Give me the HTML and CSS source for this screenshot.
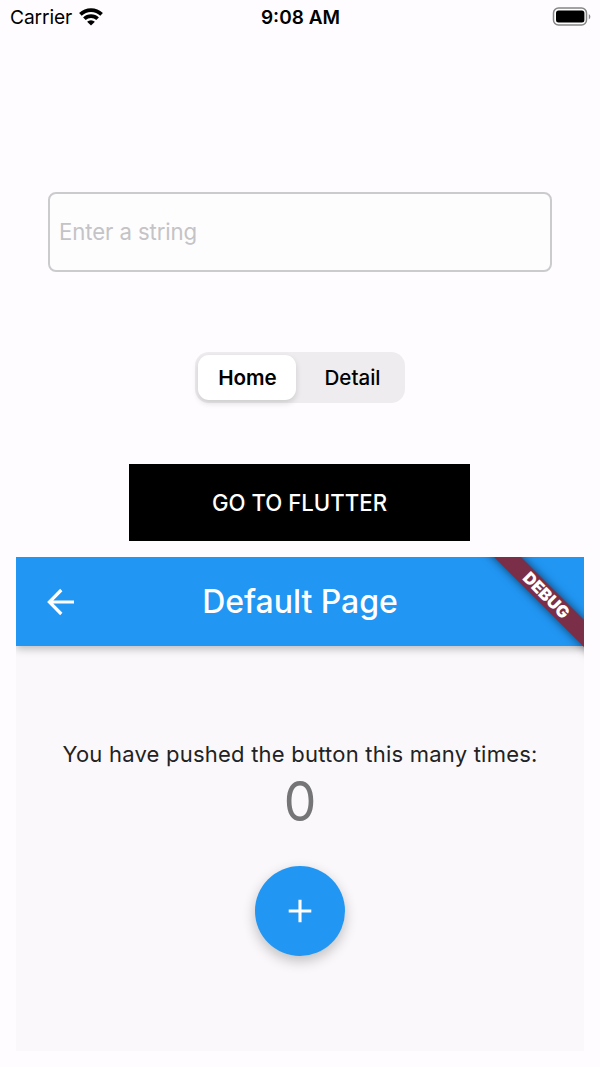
FILE: index.html
```html
<!DOCTYPE html>
<html lang="en">
<head>
<meta charset="utf-8">
<title>Default Page</title>
<link rel="stylesheet" href="styles.css">
</head>
<body>
<header class="status">
  <div class="carrier"><span class="carrier-name">Carrier</span>
    <svg class="wifi" width="24" height="18" viewBox="0 0 24 18"><g fill="none" stroke="#000" stroke-width="3.7"><path d="M1.4 6.4a15.2 15.2 0 0 1 21.2 0"/><path d="M5.4 10.8a9.4 9.4 0 0 1 13.2 0"/></g><path d="M12 17.6 8.1 13.8a5.5 5.5 0 0 1 7.8 0z"/></svg>
  </div>
  <span class="time">9:08 AM</span>
  <svg class="battery" width="39" height="20" viewBox="0 0 39 20"><rect x="1.5" y="1" width="33" height="17" rx="5" fill="none" stroke="#858585" stroke-width="1.5"/><rect x="4" y="3.4" width="28.4" height="12.2" rx="2.5"/><path d="M36.8 7v5.4q1.6-1 1.6-2.7T36.8 7z" fill="#858585"/></svg>
</header>
<main class="native">
  <input class="field" type="text" placeholder="Enter a string">
  <div class="segments"><span class="segment selected">Home</span><span class="segment">Detail</span></div>
  <button class="go">GO TO FLUTTER</button>
</main>
<section class="flutter">
  <div class="appbar">
    <svg class="back" width="28" height="28" viewBox="0 0 28 28"><path d="M27 14H3M14.3 2 2.4 14l11.9 12" fill="none" stroke="#fff" stroke-width="3.2"/></svg>
    <h1 class="title">Default Page</h1>
  </div>
  <div class="content">
    <p class="message">You have pushed the button this many times:</p>
    <p class="count">0</p>
    <button class="fab" aria-label="Increment"><svg width="24" height="24" viewBox="0 0 24 24"><path d="M12 .7v22.6M.7 12h22.6" stroke="#fff" stroke-width="3.1"/></svg></button>
  </div>
  <div class="banner"><span class="ribbon">DEBUG</span></div>
</section>
</body>
</html>
```
FILE: styles.css
```css
* { box-sizing: border-box; }
body {
  margin: 0;
  height: 1067px;
  overflow: hidden;
  background: #fefcfe;
  font-family: Inter, "Liberation Sans", sans-serif;
  color: #000;
}
button { border: 0; padding: 0; font: inherit; }
.status {
  height: 34px;
  padding: 0 9px 0 10px;
  display: grid;
  grid-template-columns: 1fr auto 1fr;
  align-items: center;
}
.carrier { display: flex; align-items: center; gap: 7px; }
.carrier-name { font-size: 19.2px; letter-spacing: -0.1px; }
.wifi { margin-top: -1px; }
.time { font-size: 19px; font-weight: 600; }
.battery { justify-self: end; margin-top: -1px; }
.native {
  padding-top: 158px;
  display: flex;
  flex-direction: column;
  align-items: center;
}
.field {
  width: 504px;
  height: 80px;
  padding: 0 9px 1px;
  border: 2px solid #cbcacd;
  border-radius: 8px;
  background: #fefdfe;
  font: 22.2px Inter, sans-serif;
  letter-spacing: -0.1px;
}
.field::placeholder { color: #c4c3c6; opacity: 1; }
.segments {
  display: grid;
  grid-template-columns: 1fr 1fr;
  width: 210px;
  height: 51px;
  margin-top: 80px;
  padding: 3px;
  border-radius: 14px;
  background: #eeecee;
}
.segment {
  display: flex;
  align-items: center;
  justify-content: center;
  padding-left: 3px;
  font-size: 20.6px;
  font-weight: 500;
}
.selected {
  width: 98px;
  padding-left: 1px;
  border-radius: 11px;
  background: #fff;
  box-shadow: 0 3px 6px rgba(0, 0, 0, .14);
  font-weight: 600;
}
.go {
  width: 341px;
  height: 77px;
  margin-top: 61px;
  margin-right: 1px;
  background: #000;
  color: #fff;
  font-size: 22.2px;
  font-weight: 500;
}
.flutter {
  position: relative;
  display: flex;
  flex-direction: column;
  height: 494px;
  margin: 16px 16px 0;
  overflow: hidden;
  background: #faf8fb;
}
.appbar {
  display: grid;
  grid-template-columns: 1fr auto 1fr;
  align-items: center;
  height: 89px;
  padding: 0 31px;
  background: #2196f3;
  box-shadow: 0 3px 8px rgba(0, 0, 0, .25);
}
.title {
  margin: 0;
  color: #fff;
  font-size: 32px;
  font-weight: 500;
  letter-spacing: -0.05px;
}
.content {
  display: flex;
  flex-direction: column;
  align-items: center;
  padding-top: 92px;
}
.message, .count { margin: 0; white-space: nowrap; }
.message { color: #222; font-size: 22px; line-height: 32px; letter-spacing: .22px; }
.count {
  color: #757476;
  font-size: 54.4px;
  line-height: 62px;
  transform: scaleX(.95);
}
.fab {
  display: grid;
  place-items: center;
  width: 90px;
  height: 90px;
  margin-top: 34px;
  border-radius: 50%;
  background: #2196f3;
  box-shadow: 0 5px 13px rgba(0, 0, 0, .24);
}
.banner {
  position: absolute;
  top: 0;
  right: 0;
  display: flex;
  align-items: center;
  justify-content: center;
  width: 77px;
  height: 77px;
}
.ribbon {
  flex: none;
  width: 160px;
  height: 19px;
  transform: rotate(45deg);
  background: #7b2e47;
  box-shadow: 0 0 10px rgba(0, 0, 0, .6);
  color: #fff;
  font-size: 16.6px;
  font-weight: 900;
  line-height: 19px;
  text-align: center;
}
```
